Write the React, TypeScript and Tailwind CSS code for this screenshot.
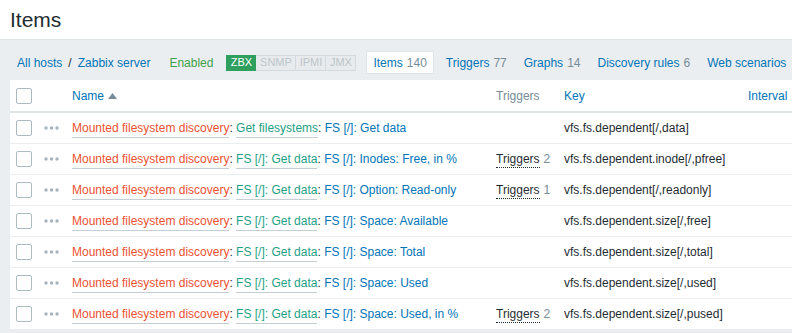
import React from "react";

type Row = {
  parent: string;
  name: string;
  triggers?: number;
  key: string;
};

const rows: Row[] = [
  { parent: "Get filesystems", name: "FS [/]: Get data", key: "vfs.fs.dependent[/,data]" },
  { parent: "FS [/]: Get data", name: "FS [/]: Inodes: Free, in %", triggers: 2, key: "vfs.fs.dependent.inode[/,pfree]" },
  { parent: "FS [/]: Get data", name: "FS [/]: Option: Read-only", triggers: 1, key: "vfs.fs.dependent[/,readonly]" },
  { parent: "FS [/]: Get data", name: "FS [/]: Space: Available", key: "vfs.fs.dependent.size[/,free]" },
  { parent: "FS [/]: Get data", name: "FS [/]: Space: Total", key: "vfs.fs.dependent.size[/,total]" },
  { parent: "FS [/]: Get data", name: "FS [/]: Space: Used", key: "vfs.fs.dependent.size[/,used]" },
  { parent: "FS [/]: Get data", name: "FS [/]: Space: Used, in %", triggers: 2, key: "vfs.fs.dependent.size[/,pused]" },
];

const tabs = [
  { label: "Triggers", count: 77 },
  { label: "Graphs", count: 14 },
  { label: "Discovery rules", count: 6 },
  { label: "Web scenarios" },
];

function Checkbox() {
  return <span className="block w-4 h-4 rounded-[2px] border border-[#acbbc2] bg-white" />;
}

function Dots() {
  return (
    <svg width="15" height="4" viewBox="0 0 15 4" className="block">
      <circle cx="2" cy="2" r="1.7" fill="#a7b3bb" />
      <circle cx="7.5" cy="2" r="1.7" fill="#a7b3bb" />
      <circle cx="13" cy="2" r="1.7" fill="#a7b3bb" />
    </svg>
  );
}

const grid = "grid grid-cols-[28px_34px_424px_68px_184px_1fr] items-center";

export default function App() {
  return (
    <div
      className="w-[792px] h-[333px] overflow-hidden bg-[#ebeef0] text-[12px] text-[#1f2c33]"
      style={{ fontFamily: '"Liberation Sans", Arial, sans-serif' }}
    >
      {/* Page header */}
      <div className="h-10 bg-white border-b border-[#dfe4e7] flex items-center pl-[10px]">
        <h1 className="text-[21px] leading-none font-normal text-[#1f2c33]">Items</h1>
      </div>

      {/* Host navigation */}
      <div className="h-[40px] pt-[11px] pl-[17px] whitespace-nowrap">
        <div className="h-[23px] flex items-center">
          <a className="text-[#0275b8]">All hosts</a>
          <span className="mx-[6px]">/</span>
          <a className="text-[#0275b8]">Zabbix server</a>
          <span className="ml-[19px] text-[#3fa34a]">Enabled</span>
          <div className="ml-[13px] flex items-center h-[16px] text-[11px] leading-none">
            <span className="w-[30px] h-full flex items-center justify-center bg-[#2f9f5e] text-white border border-[#2f9f5e]">ZBX</span>
            <span className="w-[40px] h-full flex items-center justify-center bg-[#e8ebed] text-[#bbc5cb] border border-[#d3dadf] border-l-0">SNMP</span>
            <span className="w-[30px] h-full flex items-center justify-center bg-[#e8ebed] text-[#bbc5cb] border border-[#d3dadf] border-l-0">IPMI</span>
            <span className="w-[30px] h-full flex items-center justify-center bg-[#e8ebed] text-[#bbc5cb] border border-[#d3dadf] border-l-0">JMX</span>
          </div>
          <div className="ml-[10px] h-[23px] px-[6px] flex items-center bg-white border border-[#dfe4e7]">
            <span className="text-[#0275b8]">Items</span>
            <span className="ml-1 text-[#768d99]">140</span>
          </div>
          {tabs.map((t, i) => (
            <div key={t.label} className={`${i === 0 ? "ml-[12px]" : "ml-[17px]"} flex items-center`}>
              <span className="text-[#0275b8]">{t.label}</span>
              {t.count !== undefined && <span className="ml-1 text-[#768d99]">{t.count}</span>}
            </div>
          ))}
        </div>
      </div>

      {/* Items table */}
      <div className="ml-[10px] w-[900px] bg-white">
        <div className={`${grid} h-[33px] border-b-2 border-[#dfe4e7]`}>
          <div className="pl-[6px]">
            <Checkbox />
          </div>
          <div />
          <div className="flex items-center gap-[4px] text-[#0275b8]">
            Name
            <svg width="9" height="6" viewBox="0 0 9 6">
              <path d="M0 6 L4.5 0 L9 6 Z" fill="#768d99" />
            </svg>
          </div>
          <div className="text-[#768d99]">Triggers</div>
          <div className="text-[#0275b8]">Key</div>
          <div className="text-[#0275b8]">Interval</div>
        </div>

        {rows.map((r, i) => (
          <div key={i} className={`${grid} h-[31px] border-b border-[#ebeef0] whitespace-nowrap`}>
            <div className="pl-[6px]">
              <Checkbox />
            </div>
            <div className="pl-[6px]">
              <Dots />
            </div>
            <div>
              <a className="text-[#eb5232] border-b border-[#c5ced3] pb-[2px]">Mounted filesystem discovery</a>
              <span>: </span>
              <a className="text-[#1e9f87] border-b border-[#c5ced3] pb-[2px]">{r.parent}</a>
              <span>: </span>
              <a className="text-[#0275b8]">{r.name}</a>
            </div>
            <div>
              {r.triggers !== undefined && (
                <>
                  <span className="border-b border-dotted border-[#1f2c33] pb-[1px]">Triggers</span>
                  <span className="ml-1 text-[#768d99]">{r.triggers}</span>
                </>
              )}
            </div>
            <div>{r.key}</div>
            <div />
          </div>
        ))}
      </div>
    </div>
  );
}
